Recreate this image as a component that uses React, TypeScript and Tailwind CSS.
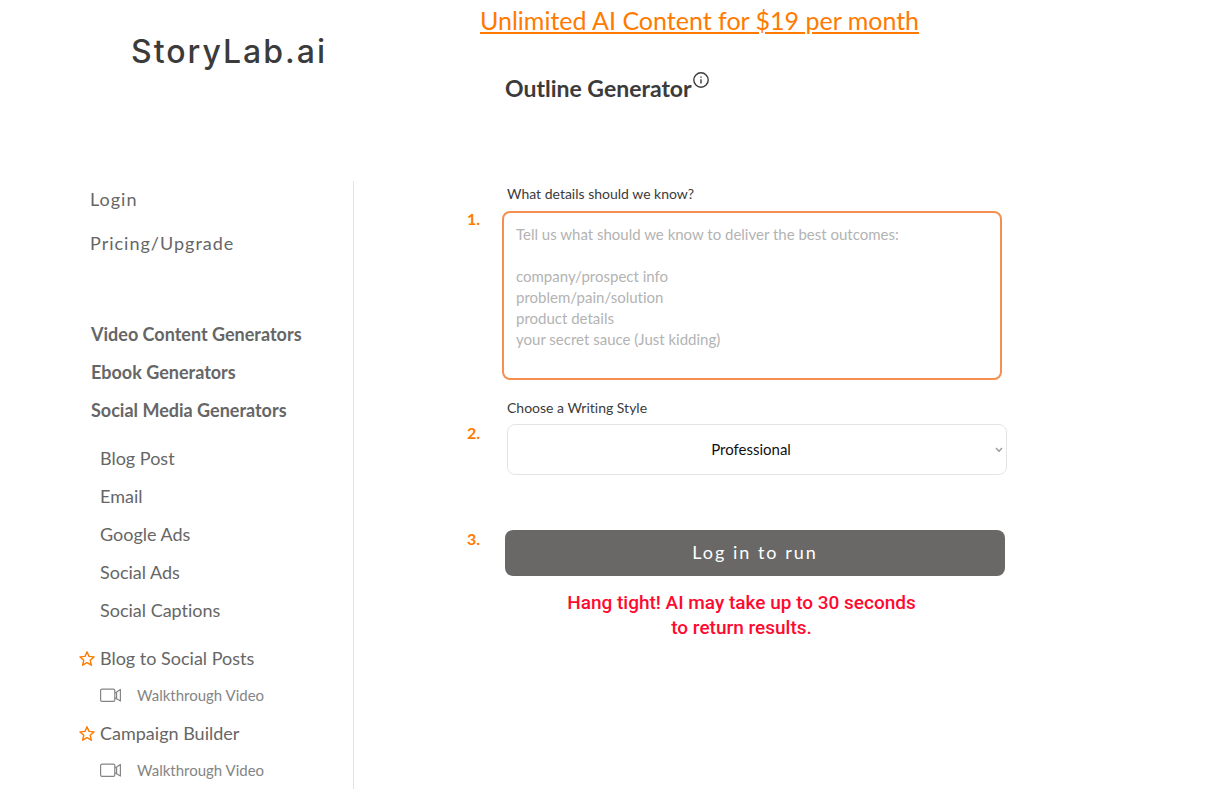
import { useState } from 'react'

const GENERATORS = [
  'Video Content Generators',
  'Ebook Generators',
  'Social Media Generators',
]

const TOOLS = ['Blog Post', 'Email', 'Google Ads', 'Social Ads', 'Social Captions']

const FEATURED = ['Blog to Social Posts', 'Campaign Builder']

const WRITING_STYLES = ['Professional', 'Casual', 'Friendly', 'Persuasive']

const DETAILS_PLACEHOLDER = `Tell us what should we know to deliver the best outcomes:

company/prospect info
problem/pain/solution
product details
your secret sauce (Just kidding)`

function StarIcon() {
  return (
    <svg
      viewBox="0 0 16 16"
      className="h-4 w-4 shrink-0 fill-none stroke-[#ff7a00]"
      strokeWidth="1.4"
      strokeLinejoin="round"
      aria-hidden="true"
    >
      <path d="M8 1.8 10 6.4 15 6.9 11.2 10.2 12.4 15.2 8 12.6 3.6 15.2 4.8 10.2 1 6.9 6 6.4Z" />
    </svg>
  )
}

function VideoIcon() {
  return (
    <svg
      viewBox="0 0 22 14"
      className="h-[14px] w-[22px] shrink-0 fill-none stroke-[#858585]"
      strokeWidth="1.2"
      strokeLinejoin="round"
      aria-hidden="true"
    >
      <rect x="0.6" y="1.2" width="14.2" height="12.2" rx="1.4" />
      <path d="M14.8 4.9 16.6 3.9 20.4 1.5V13.1L16.6 10.7 14.8 9.9M16.6 3.9V10.7" />
    </svg>
  )
}

function InfoIcon() {
  return (
    <svg
      viewBox="0 0 16 16"
      className="h-4 w-4 fill-none stroke-[#3b3b3b]"
      strokeWidth="1.4"
      aria-hidden="true"
    >
      <circle cx="8" cy="8" r="7.2" />
      <path d="M8 7.2V11.6M8 4.4V5.8" />
    </svg>
  )
}

function Sidebar() {
  return (
    <aside className="w-[354px] shrink-0 border-r border-[#e3e3e3] pt-[6px] text-lg leading-6 text-[#666]">
      <nav>
        <ul className="flex flex-col gap-5 pl-[90px] tracking-[1px]">
          <li><a href="#login">Login</a></li>
          <li><a href="#pricing">Pricing/Upgrade</a></li>
        </ul>
        <ul className="mt-[67px] flex flex-col gap-[14px] pl-[91px] font-bold">
          {GENERATORS.map((name) => (
            <li key={name}><a href="#generators">{name}</a></li>
          ))}
        </ul>
        <ul className="mt-6 flex flex-col gap-[14px] pl-[100px] [font-variant-ligatures:none]">
          {TOOLS.map((name) => (
            <li key={name}><a href="#tools">{name}</a></li>
          ))}
        </ul>
        <ul className="mt-6 flex flex-col gap-[14px] pl-[79px]">
          {FEATURED.map((name) => (
            <li key={name}>
              <a href="#featured" className="flex items-center gap-[5px]">
                <StarIcon />
                {name}
              </a>
              <a
                href="#walkthrough"
                className="mt-[13px] flex items-center gap-[15px] pl-[21px] text-[15px] leading-6 text-[#858585]"
              >
                <VideoIcon />
                Walkthrough Video
              </a>
            </li>
          ))}
        </ul>
      </nav>
    </aside>
  )
}

export default function App() {
  const [details, setDetails] = useState('')
  const [style, setStyle] = useState('Professional')

  return (
    <div className="flex min-h-screen flex-col bg-white font-['Lato',sans-serif] text-[#3b3b3b]">
      <header className="flex h-[181px] items-start">
        <a
          href="#home"
          className="w-[480px] shrink-0 pt-8 pl-[131px] font-['Inter',sans-serif] text-[32px] leading-10 font-medium tracking-[2px]"
        >
          StoryLab.ai
        </a>
        <div>
          <a
            href="#upgrade"
            className="block text-[25px] leading-10 text-[#ff7a00] underline"
          >
            Unlimited AI Content for $19 per month
          </a>
          <div className="mt-8 flex items-start gap-px pl-[25px]">
            <h1 className="text-[23px] leading-8 font-bold">Outline Generator</h1>
            <button type="button" aria-label="About this generator">
              <InfoIcon />
            </button>
          </div>
        </div>
      </header>

      <div className="flex grow">
        <Sidebar />
        <main className="grow pl-[113px]">
          <form
            onSubmit={(e) => e.preventDefault()}
            className="flex max-w-[540px] flex-col"
          >
            <div className="flex">
              <span className="w-[35px] shrink-0 pt-7 text-base leading-5 font-bold text-[#ff7a00]">
                1.
              </span>
              <div className="w-[500px]">
                <label htmlFor="details" className="block pt-[3px] pb-[7px] pl-[5px] text-sm leading-5">
                  What details should we know?
                </label>
                <textarea
                  id="details"
                  value={details}
                  onChange={(e) => setDetails(e.target.value)}
                  placeholder={DETAILS_PLACEHOLDER}
                  className="block h-[169px] w-full resize-none rounded-lg border-2 border-[#f58f50] px-3 pt-[11px] pb-2 text-[15px] leading-[21px] [font-variant-ligatures:none] placeholder:text-[#b3b3b3] focus:outline-none"
                />
              </div>
            </div>

            <div className="mt-4 flex">
              <span className="w-10 shrink-0 pt-[27px] text-base leading-5 font-bold text-[#ff7a00]">
                2.
              </span>
              <div className="w-[500px]">
                <label
                  htmlFor="style"
                  className="block pt-[2px] pb-[6px] text-sm leading-5 [font-variant-ligatures:none]"
                >
                  Choose a Writing Style
                </label>
                <div className="relative">
                  <select
                    id="style"
                    value={style}
                    onChange={(e) => setStyle(e.target.value)}
                    className="block h-[51px] w-full appearance-none rounded-lg border border-[#e2e5e8] bg-white pr-4 pl-1 text-center text-[15px] text-[#111] [text-align-last:center] focus:outline-none"
                  >
                    {WRITING_STYLES.map((s) => (
                      <option key={s} value={s}>{s}</option>
                    ))}
                  </select>
                  <svg
                    viewBox="0 0 8 6"
                    className="pointer-events-none absolute top-[23px] right-1 h-[6px] w-2 fill-none stroke-[#999]"
                    strokeWidth="1.4"
                    aria-hidden="true"
                  >
                    <path d="M1 1 4 4.2 7 1" />
                  </svg>
                </div>
              </div>
            </div>

            <div className="mt-[55px] flex">
              <span className="w-[38px] shrink-0 text-base leading-[18px] font-bold text-[#ff7a00]">
                3.
              </span>
              <div className="w-[500px]">
                <button
                  type="submit"
                  className="h-[46px] w-full rounded-lg bg-[#696866] pb-[2px] text-lg tracking-[2px] text-white"
                >
                  Log in to run
                </button>
                <p className="mt-[14px] pr-[27px] text-center font-['Roboto',sans-serif] text-[19px] leading-[25px] font-medium text-[#ff0a2f]">
                  Hang tight! AI may take up to 30 seconds
                  <br />
                  to return results.
                </p>
              </div>
            </div>
          </form>
        </main>
      </div>
    </div>
  )
}
